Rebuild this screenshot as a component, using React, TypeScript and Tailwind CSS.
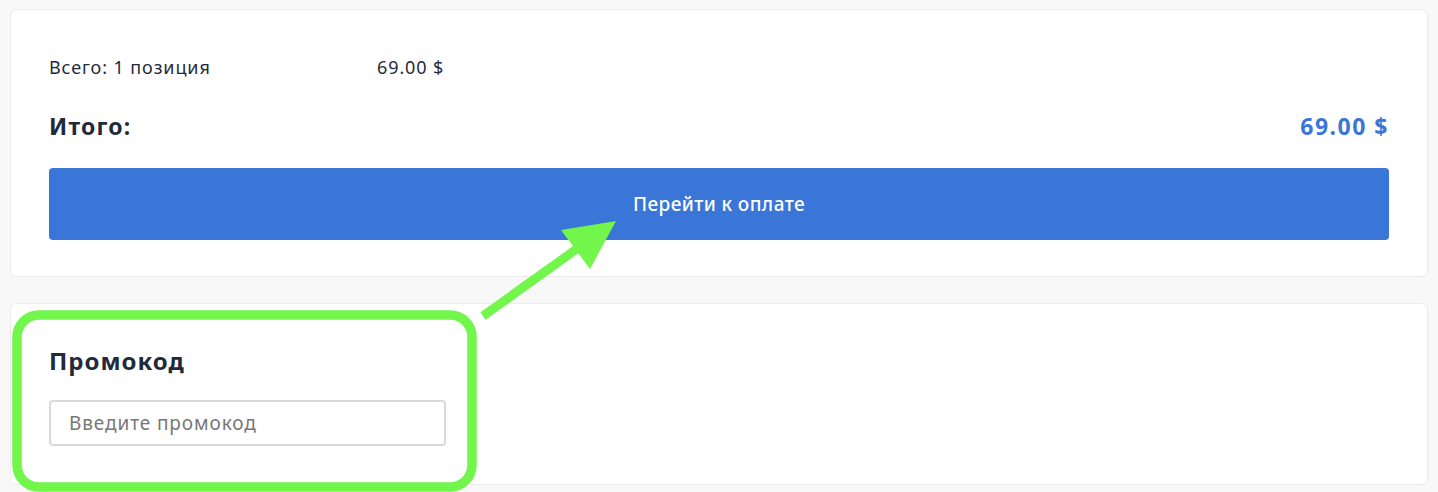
import React from "react";

export default function App() {
  const font = { fontFamily: '"Noto Sans", "Open Sans", sans-serif' };
  return (
    <div className="relative w-[1438px] h-[492px] overflow-hidden bg-[#f8f8f8]" style={font}>
      <div className="px-[10px] pt-[9px]">
        <div className="bg-white border border-[#ebebeb] rounded-[6px] px-[38px] pt-[45px] pb-[36px]">
          <div className="flex items-center h-[24px] text-[18px] tracking-[0.9px] text-[#1f2b3b]">
            <div className="w-[328px]">Всего: 1 позиция</div>
            <div>69.00 $</div>
          </div>
          <div className="flex items-center justify-between h-[28px] mt-[33px] text-[23px] tracking-[1.2px] font-bold">
            <div className="text-[#1f2b3b]">Итого:</div>
            <div className="text-[#3a75d8] tracking-[1.5px]">69.00 $</div>
          </div>
          <button className="mt-[28px] w-full h-[72px] rounded-[4px] bg-[#3a75d8] text-white text-[19px] tracking-[0.4px] font-medium flex items-center justify-center">
            Перейти к оплате
          </button>
        </div>
        <div className="mt-[26px] bg-white border border-[#ebebeb] rounded-[6px] px-[38px] pt-[42px] pb-[38px]">
          <div className="h-[30px] flex items-center text-[24px] tracking-[1px] font-bold text-[#1f2b3b]">Промокод</div>
          <input
            className="mt-[24px] block w-[397px] h-[46px] border-2 border-[#dadada] rounded-[4px] px-[18px] text-[19px] tracking-[0.9px] text-[#333] placeholder:text-[#777] outline-none"
            placeholder="Введите промокод"
            style={font}
          />
        </div>
      </div>
      <svg className="absolute left-0 top-0 pointer-events-none" width="1438" height="492" viewBox="0 0 1438 492">
        <rect x="17" y="315" width="455" height="172" rx="22" ry="22" fill="none" stroke="#72f64c" strokeWidth="9.5" />
        <line x1="483" y1="316" x2="578" y2="248" stroke="#72f64c" strokeWidth="9" />
        <polygon points="616,221 561,230 590,269" fill="#72f64c" />
      </svg>
    </div>
  );
}
